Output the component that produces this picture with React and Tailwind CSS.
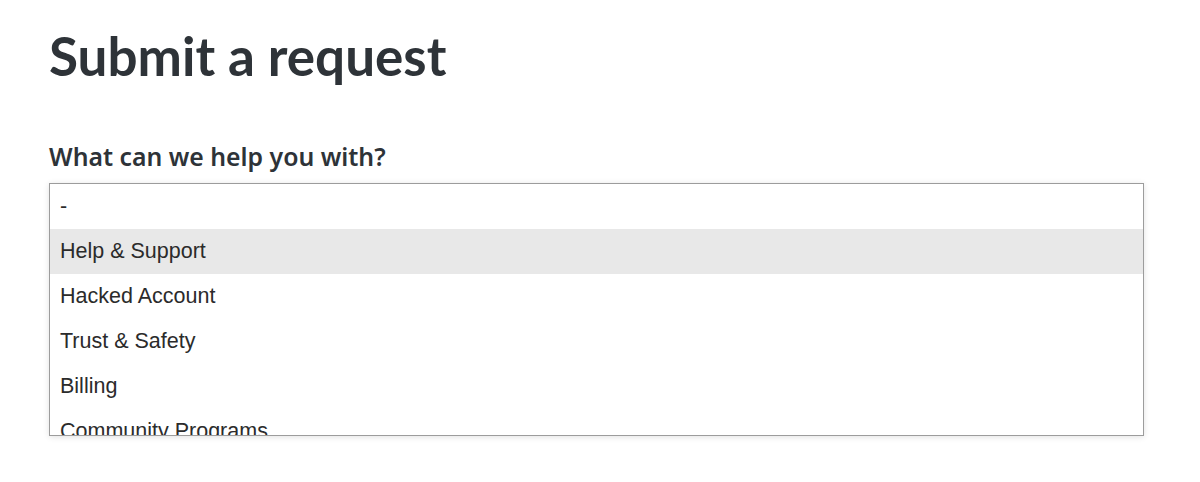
import React from 'react';

const options = [
  '-',
  'Help & Support',
  'Hacked Account',
  'Trust & Safety',
  'Billing',
  'Community Programs',
  'Other',
];

const App = () => {
  const selected = 'Help & Support';

  return (
    <div className="min-h-[482px] w-[1200px] bg-white">
      <div className="pl-[49px] pr-[56px] pt-[22px]">
        {/* 标题 */}
        <h1
          className="text-[53px] leading-[68px] font-bold text-[#2e3338]"
          style={{ fontFamily: 'Lato, "Noto Sans", sans-serif' }}
        >
          Submit a request
        </h1>

        {/* 表单项 */}
        <label
          className="mt-[50px] block text-[24.8px] leading-[32px] font-semibold text-[#2e3338]"
          style={{ fontFamily: '"Noto Sans", "Open Sans", sans-serif' }}
        >
          What can we help you with?
        </label>

        <div className="mt-[11px] h-[253px] overflow-hidden border border-[#9c9c9c] bg-white shadow-[0_1px_6px_rgba(0,0,0,0.12)]">
          {options.map((opt) => (
            <div
              key={opt}
              className={`h-[45px] pl-[10px] flex items-center text-[21.5px] text-[#2b2b2b] ${
                opt === selected ? 'bg-[#e8e8e8]' : 'bg-white'
              }`}
              style={{ fontFamily: '"Liberation Sans", Arial, sans-serif' }}
            >
              {opt}
            </div>
          ))}
        </div>
      </div>
    </div>
  );
};

export default App;
